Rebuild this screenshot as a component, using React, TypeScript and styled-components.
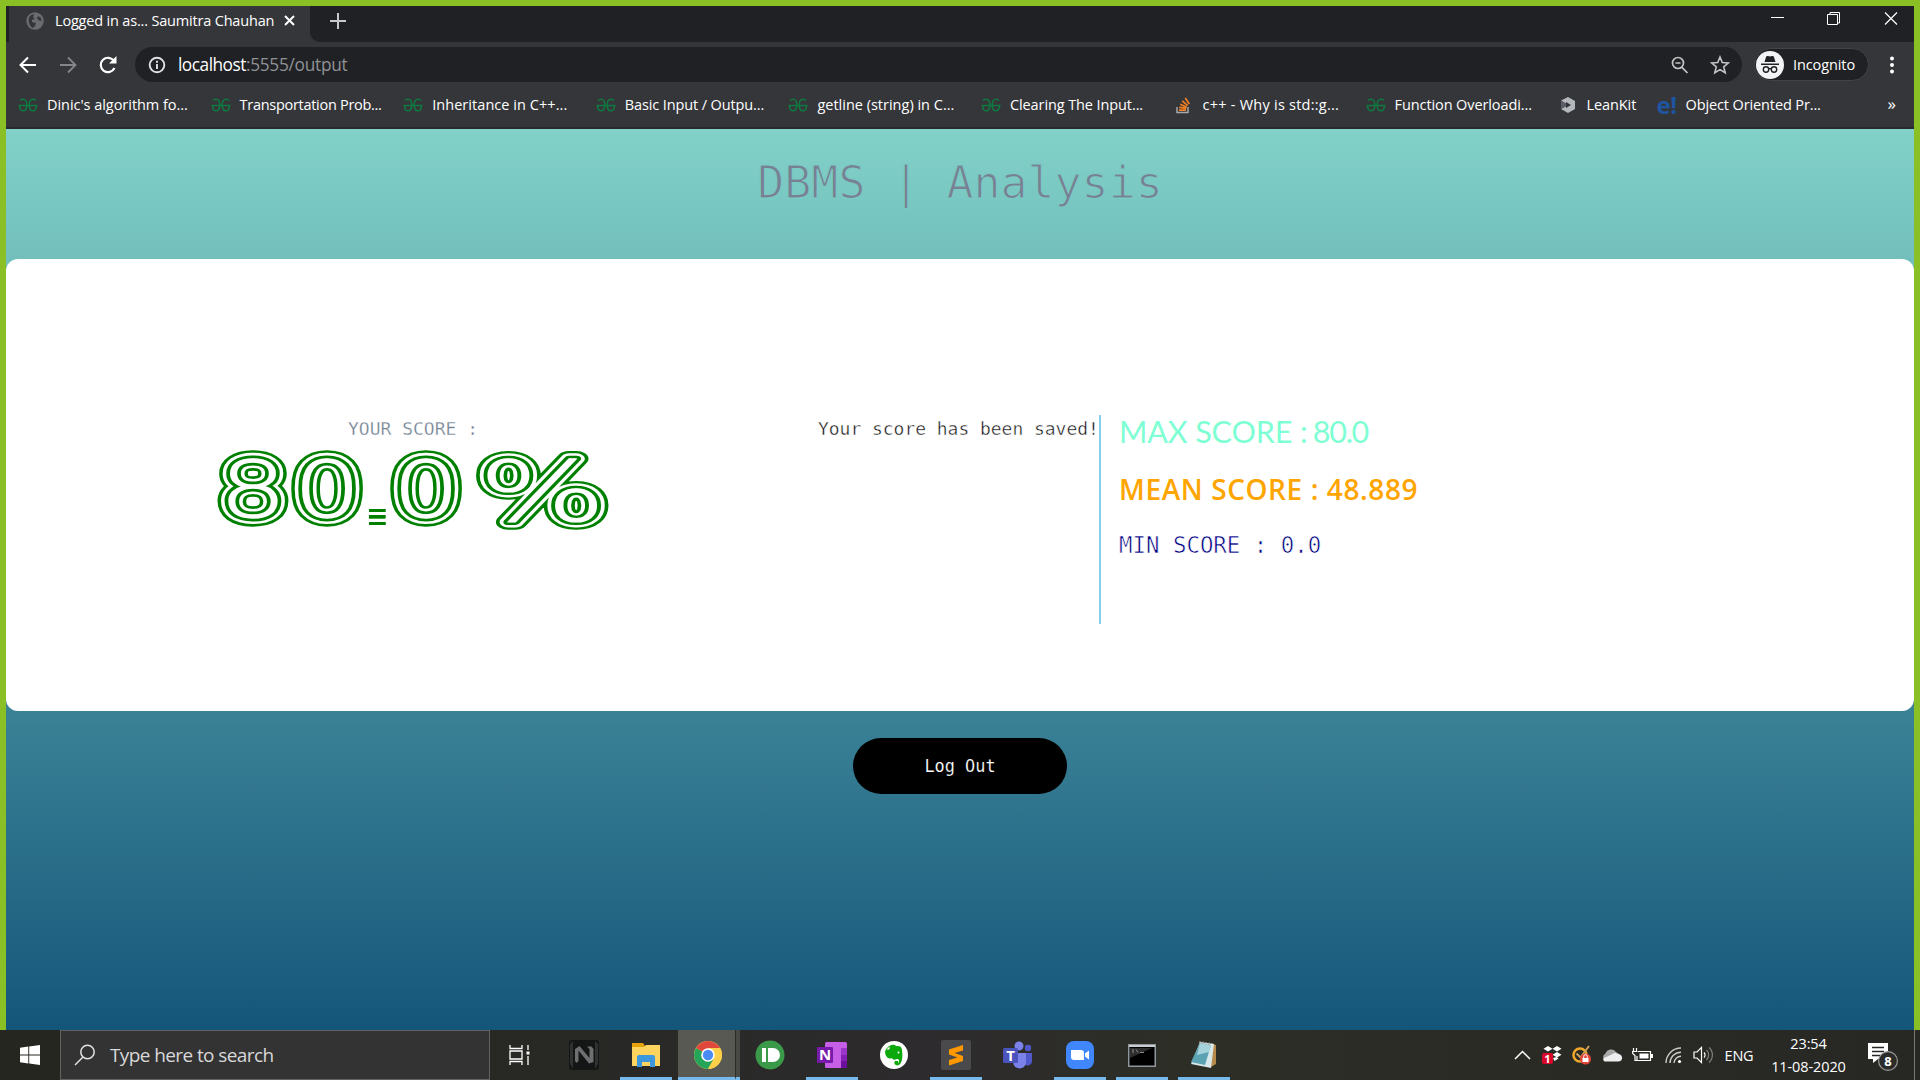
import React from 'react';
import styled, { createGlobalStyle } from 'styled-components';

const ui = `'Open Sans', 'Noto Sans', sans-serif`;
const mono = `'DejaVu Sans Mono', 'Liberation Mono', monospace`;

const GlobalStyle = createGlobalStyle`
  * { box-sizing: border-box; }
  body { margin: 0; background: #8bbf26; font-family: ${ui}; overflow: hidden; }
  svg { display: block; flex: none; }
`;

const Desktop = styled.div`
  width: 1920px;
  height: 1080px;
  display: flex;
  flex-direction: column;
  background: #8bbf26;
`;
const BrowserWindow = styled.div`
  height: 1030px;
  padding: 6px 6px 0 6px;
  display: flex;
  flex-direction: column;
`;

/* ---------- browser chrome ---------- */
const TabStrip = styled.div`
  height: 36px;
  flex: none;
  background: #202124;
  display: flex;
  justify-content: space-between;
  padding-left: 3px;
`;
const TabGroup = styled.div`
  display: flex;
  align-items: center;
`;
const Tab = styled.div`
  width: 301px;
  height: 36px;
  background: #35363a;
  display: flex;
  align-items: center;
  padding: 0 0 7px 17px;
`;
const TabTitle = styled.span`
  width: 229px;
  margin-left: 11px;
  font-size: 14.5px;
  letter-spacing: -0.18px;
  color: #fff;
  white-space: nowrap;
`;
const TabCurve = styled.div`
  width: 10px;
  height: 10px;
  align-self: flex-end;
  background: radial-gradient(circle at 10px 0, #202124 9.5px, #35363a 10.5px);
`;
const NewTab = styled.div`
  padding: 0 0 7px 10px;
`;
const WindowControls = styled.div`
  display: flex;
  padding-top: 4px;
  margin-right: -5px;
`;
const ControlSlot = styled.div`
  width: 57px;
  height: 18px;
  display: flex;
  justify-content: center;
`;
const Toolbar = styled.div`
  height: 45px;
  flex: none;
  background: #35363a;
  display: flex;
  align-items: center;
`;
const NavSlot = styled.div<{ $w: number }>`
  width: ${p => p.$w}px;
  display: flex;
  justify-content: center;
`;
const Omnibox = styled.div`
  width: 1607px;
  height: 35px;
  margin-left: 6px;
  border-radius: 18px;
  background: #202124;
  display: flex;
  align-items: center;
  padding: 0 12px 0 13px;
`;
const Url = styled.div`
  flex: 1;
  margin-left: 12px;
  font-size: 17.3px;
  letter-spacing: -0.5px;
  color: #fff;
  span { color: #8f9195; letter-spacing: -0.28px; }
`;
const OmniActions = styled.div`
  display: flex;
  gap: 20px;
`;
const Incognito = styled.div`
  width: 115px;
  height: 33px;
  margin-left: 12px;
  border-radius: 17px;
  border: 1px solid #424347;
  background: #202124;
  display: flex;
  align-items: center;
  gap: 9px;
  padding-left: 1px;
  color: #fff;
  font-size: 14.5px;
  letter-spacing: -0.1px;
`;
const MenuSlot = styled.div`
  flex: 1;
  display: flex;
  justify-content: center;
`;
const Bookmarks = styled.div`
  height: 42px;
  flex: none;
  background: #35363a;
  border-bottom: 2px solid #292a2d;
  display: flex;
  align-items: center;
  padding: 0 0 5px 11px;
`;
const Bookmark = styled.div<{ $w: number }>`
  width: ${p => p.$w}px;
  display: flex;
  align-items: center;
  gap: 8px;
  color: #fff;
  font-size: 14.5px;
  white-space: nowrap;
`;
const BookmarkLabel = styled.span<{ $ls: number }>`
  letter-spacing: ${p => p.$ls}px;
`;
const More = styled.div`
  margin-left: auto;
  padding: 0 18px 3px 0;
  color: #fff;
  font-size: 17px;
`;

/* ---------- page ---------- */
const Page = styled.main`
  flex: 1;
  width: 1908px;
  background: linear-gradient(#82d1c8, #14567a);
`;
const PageTitle = styled.h1`
  height: 130px;
  margin: 0;
  padding-top: 29px;
  text-align: center;
  font: 400 44.9px/50px ${mono};
  color: #788094;
  -webkit-text-stroke: 1.2px #7bcac3;
`;
const Card = styled.section`
  height: 452px;
  border-radius: 12px;
  background: #fff;
  padding-top: 156px;
  display: flex;
`;
const ScoreColumn = styled.div`
  width: 812px;
  height: 209px;
  display: flex;
  flex-direction: column;
  align-items: center;
`;
const ScoreLabel = styled.div`
  height: 28px;
  padding-left: 2px;
  font: 18px/28px ${mono};
  color: #708090;
  -webkit-text-stroke: 0.3px #fff;
  white-space: pre;
`;
const SavedColumn = styled.div`
  width: 283px;
  height: 209px;
  border-right: 2px solid #87ceeb;
  font: 17.95px/28px ${mono};
  color: #111;
  -webkit-text-stroke: 0.4px #fff;
  white-space: nowrap;
`;
const Stats = styled.div`
  padding-left: 18px;
  white-space: nowrap;
`;
const MaxScore = styled.div`
  font: 400 30.5px/33px Lato, sans-serif;
  letter-spacing: -0.1px;
  color: #7fffd4;
  span { letter-spacing: -1.3px; }
`;
const MeanScore = styled.div`
  margin-top: 22px;
  font: 600 28px/38px ${ui};
  letter-spacing: 0.6px;
  color: orange;
`;
const MinScore = styled.div`
  margin-top: 21px;
  font: 22.4px/32px ${mono};
  color: #000080;
  -webkit-text-stroke: 0.6px #fff;
`;
const LogOut = styled.button`
  display: block;
  width: 214px;
  height: 56px;
  margin: 27px auto 0;
  border: 0;
  border-radius: 28px;
  background: #000;
  color: #fff;
  font: 16.9px ${mono};
  -webkit-text-stroke: 0.15px #000;
`;
const NeonSvg = styled.svg`
  font-family: 'DejaVu Sans Light', 'DejaVu Sans', sans-serif;
  font-weight: 200;
  overflow: visible;
  stroke-linejoin: round;
`;
const NeonLayer = styled.g<{ $w: number; $c: string }>`
  fill: ${p => p.$c};
  stroke: ${p => p.$c};
  stroke-width: ${p => p.$w}px;
  text, tspan, use { vector-effect: non-scaling-stroke; }
`;
const BarredPoint = styled.tspan`
  font: 700 90px 'DejaVu Sans', sans-serif;
  fill: url(#bars);
  stroke: none;
`;

/* Parallel-line lettering: one hairline text, stroked in alternating widths. */
const layers: [number, string][] = [[20.6, 'green'], [14.4, '#fff'], [8.2, 'green']];
const ScoreNumber = () => (
  <NeonSvg width="400" height="90" viewBox="212 443 400 90">
    <defs>
      <pattern id="bars" patternUnits="userSpaceOnUse" x="0" y="-500" width="1000" height="1000">
        <path d="M271.300 492h12v3h-12zM271.300 498.300h12v3h-12zM271.300 505h12v3h-12z" fill="green" />
      </pattern>
    </defs>
    {layers.map(([w, c]) => (
      <NeonLayer key={w} $w={w} $c={c}>
        <use href="#neon-number" />
      </NeonLayer>
    ))}
    <NeonLayer $w={1.6} $c="#fff">
      <text id="neon-number" transform="translate(0 517) scale(1.36 1)" fontSize="78" x="161.200 215.900">
        80<BarredPoint x="262" y="9">.</BarredPoint><tspan x="288.700" y="0">0</tspan>
      </text>
    </NeonLayer>
    {layers.map(([w, c]) => (
      <NeonLayer key={w} $w={w} $c={c}>
        <use href="#neon-percent" />
      </NeonLayer>
    ))}
    <NeonLayer $w={1.6} $c="#fff">
      <text id="neon-percent" transform="translate(0 520.500) scale(1.6 1)" fontSize="84" x="299">%</text>
    </NeonLayer>
  </NeonSvg>
);

/* ---------- taskbar ---------- */
const Taskbar = styled.footer`
  height: 50px;
  background: linear-gradient(90deg, #25261f, #282825 30%, #2d2b2d 48%, #2d2e26 62%, #272724);
  display: flex;
`;
const Start = styled.div`
  width: 60px;
  display: flex;
  align-items: center;
  justify-content: center;
`;
const Search = styled.div`
  width: 430px;
  border: 1px solid #626262;
  background: #333;
  display: flex;
  align-items: center;
  padding-left: 13px;
  gap: 14px;
  color: #d8d8d8;
  font-size: 19px;
  letter-spacing: -0.6px;
`;
const TaskItem = styled.div<{ $w: number; $running?: boolean; $active?: boolean }>`
  width: ${p => p.$w}px;
  height: 50px;
  margin-left: ${p => (p.$active ? -4 : 0)}px;
  display: flex;
  align-items: center;
  justify-content: center;
  background: ${p => (p.$active ? '#585953' : 'transparent')};
  border-bottom: 3px solid ${p => (p.$running ? '#76b9ed' : 'transparent')};
  padding: 3px 0 0 ${p => (p.$active ? 3 : 0)}px;
  background-clip: padding-box;
`;
const Apps = styled.div`
  display: flex;
  gap: 10px;
  margin-left: 1px;
`;
const ActiveEdge = styled.div`
  width: 5px;
  height: 50px;
  margin: 0 -6px 0 -10px;
  background: #484945;
  border-left: 1px solid #2c2d29;
  border-bottom: 3px solid #76b9ed;
`;
const Tray = styled.div`
  margin-left: auto;
  display: flex;
  align-items: center;
  color: #fff;
`;
const TraySlot = styled.div<{ $w: number }>`
  width: ${p => p.$w}px;
  display: flex;
  justify-content: center;
`;
const Lang = styled.div`
  width: 42px;
  text-align: center;
  font-size: 14.5px;
  letter-spacing: -0.2px;
`;
const Clock = styled.div`
  width: 97px;
  text-align: center;
  font-size: 14.5px;
  line-height: 23px;
  letter-spacing: -0.1px;
`;
const Notifications = styled.div`
  width: 57px;
  padding-right: 8px;
  display: flex;
  justify-content: center;
`;
const ShowDesktop = styled.div`
  width: 6px;
  height: 50px;
  border-left: 1px solid #777;
`;

/* ---------- icons ---------- */
const GG = () => (
  <svg width="22" height="14" viewBox="0 0 22 14" fill="none" stroke="#0f7a3f" strokeWidth="1.500">
    <path d="M1.500 7.500h19M3 2.500Q4 1.200 6 1.200C8.500 1.200 9.800 3.500 9.800 7S8.500 12.800 6 12.800 2.600 11 2.600 7.500M19 2.500Q18 1.200 16 1.200C13.500 1.200 12.200 3.500 12.200 7s1.300 5.800 3.800 5.800 3.400-1.800 3.400-5.300" />
  </svg>
);
const StackOverflow = () => (
  <svg width="22" height="18" viewBox="0 0 22 18" fill="none">
    <path d="M4 11v5.500h11V11" stroke="#a8a8a8" strokeWidth="1.500" />
    <path d="M6 14.200h7M6.200 11.300l7 1M7.300 8.200l6.400 3M9.300 4.800l5.300 4.900M12.300 2l4 6" stroke="#f48024" strokeWidth="1.700" />
  </svg>
);
const LeanKit = () => (
  <svg width="20" height="18" viewBox="0 0 20 18">
    <path d="M2 4.500 9 1l7 4v8l-7 4-7-4 7-4z" fill="#b4b7bb" />
    <path d="M2 4.500 9 9l-7 4z" fill="#5b5e66" />
    <path d="M7 6l5 3-5 3z" fill="#35363a" />
  </svg>
);
const ELogo = styled.span`
  width: 21px;
  font: 700 24px/20px ${ui};
  color: #1d55a0;
  letter-spacing: -0.5px;
`;
const Explorer = () => (
  <svg width="30" height="30" viewBox="0 0 30 30">
    <path d="M1 3h11l2 3h14v5H1z" fill="#e6a20c" />
    <path d="M1 7h12l2-2h14v21H1z" fill="#ffd45e" />
    <path d="M6 26V17q0-2 2-2h14q2 0 2 2v10h-5v-5h-8v5H6z" fill="#3d97dc" />
  </svg>
);
const Chrome = () => (
  <svg width="28" height="28" viewBox="0 0 28 28">
    <circle cx="14" cy="14" r="14" fill="#fdd04a" />
    <path d="M14 14 1.900 7A14 14 0 0 1 26.100 7z" fill="#e0473d" />
    <path d="M14 14 1.900 7A14 14 0 0 0 14 28l6-10.500z" fill="#25a45a" />
    <path d="M14 7h12.100A14 14 0 0 1 14 28l6-10.500z" fill="#fdd04a" />
    <circle cx="14" cy="14" r="6.800" fill="#fff" />
    <circle cx="14" cy="14" r="5.200" fill="#4b8bf4" />
  </svg>
);
const Pushbullet = () => (
  <svg width="30" height="30" viewBox="0 0 30 30">
    <circle cx="15" cy="15" r="14.500" fill="#3b9a49" />
    <path d="M7 8h4v14H7zM13 8h5a7 7 0 0 1 0 14h-5z" fill="#fff" />
  </svg>
);
const IconLetter = styled.text<{ $size?: number }>`
  font: 700 ${p => p.$size ?? 15}px ${ui};
  fill: #fff;
  text-anchor: middle;
`;
const OneNote = () => (
  <svg width="30" height="28" viewBox="0 0 30 28">
    <rect x="8" y="1" width="22" height="26" rx="1.500" fill="#c75fe6" />
    <path d="M24 7h6v7h-6z" fill="#9a36c9" />
    <path d="M24 14h6v6h-6z" fill="#8420b5" />
    <path d="M24 20h6v7h-6z" fill="#6b0f9e" />
    <rect y="6" width="16" height="16" rx="1" fill="#7719aa" />
    <IconLetter x="8" y="19.300">N</IconLetter>
  </svg>
);
const Evernote = () => (
  <svg width="28" height="28" viewBox="0 0 28 28">
    <circle cx="14" cy="14" r="14" fill="#fff" />
    <path d="M5 10l5-5c2-2 5-1 6 0 5 0 6 1 6 5 1 6 0 12-3 14-3 1-6-1-4-4l3 0v2c2-2 1-4-1-4-3 1-4 1-5-1-4 2-7-2-7-7zM5.500 8.500h4v-4z" fill="#0ca80c" />
    <circle cx="18.500" cy="11.500" r="1" fill="#fff" />
  </svg>
);
const Sublime = () => (
  <svg width="30" height="30" viewBox="0 0 30 30">
    <rect width="30" height="30" rx="2" fill="#4a4a4c" />
    <path d="M8 9.500 22 5v5.500L13.500 13l8.500 3v5L8 25.500V20l8.500-2.500L8 14.500z" fill="#ff9800" />
  </svg>
);
const Teams = () => (
  <svg width="30" height="28" viewBox="0 0 30 28">
    <circle cx="25" cy="7" r="3.200" fill="#5059c9" />
    <path d="M20 12h9v8c0 5-7 6-8 2z" fill="#5059c9" />
    <circle cx="16" cy="5" r="4.500" fill="#7b83eb" />
    <path d="M9 12h14v9c0 8-12 9-13 0z" fill="#7b83eb" />
    <rect y="7" width="15" height="15" rx="1.500" fill="#4b53bc" />
    <IconLetter x="7.500" y="19.500">T</IconLetter>
  </svg>
);
const ZoomApp = () => (
  <svg width="28" height="28" viewBox="0 0 28 28">
    <rect width="28" height="28" rx="8" fill="#4087fc" />
    <path d="M5 9h10q3 0 3 3v7H8q-3 0-3-3zM19 12.500l4-3v9l-4-3z" fill="#fff" />
  </svg>
);
const Cmd = () => (
  <svg width="28" height="23" viewBox="0 0 28 23">
    <rect x=".75" y=".75" width="26.500" height="21.500" fill="#000" stroke="#8f969c" strokeWidth="1.500" />
    <path d="M1 2h26" stroke="#c9ced2" strokeWidth="2" />
    <path d="M2 4h22L2 14z" fill="#2d2d2d" />
    <path d="M4 6h2M4 8h2M8 5.500l2 3M12 8.500h4" stroke="#aaa" strokeWidth=".8" />
  </svg>
);
const Notepad = () => (
  <svg width="28" height="30" viewBox="0 0 28 30">
    <path d="M21 3l5 2v19l-5 3z" fill="#b58a4c" />
    <path d="M10 2l14 2-3 24L1 24z" fill="#d9e8ea" />
    <path d="M10 3l11 2-6 20L1 22z" fill="#5ba3b3" />
    <path d="M10 3l11 2-2 7-12 3z" fill="#a5d3dc" />
    <path d="M10 1v3M13 1.500v3M16 2v3M19 2.500v3" stroke="#aaa" strokeWidth="1" />
  </svg>
);
const NIcon = () => (
  <svg width="30" height="30" viewBox="0 0 30 30">
    <rect width="30" height="30" rx="3" fill="#141515" />
    <path d="M1 4v20l3 5V1zM29 4v20l-3 5V1z" fill="#303132" />
    <path d="M6 21V9l4.500-3 10 12V9L18 6.500h4.500L24.500 9v13L20 23.500l-10.500-13V21L7.500 23z" fill="#6e6f71" />
  </svg>
);

const articles: [string, number][] = [
  ["Dinic's algorithm fo...", -0.04],
  ['Transportation Prob...', -0.29],
  ['Inheritance in C++...', 0.05],
  ['Basic Input / Outpu...', -0.12],
  ['getline (string) in C...', 0],
  ['Clearing The Input...', -0.1],
];

export default function App() {
  return (
    <>
      <GlobalStyle />
      <Desktop>
        <BrowserWindow>
          <TabStrip>
            <TabGroup>
              <Tab>
                <svg width="18" height="18" viewBox="0 0 18 18">
                  <circle cx="9" cy="9" r="8.700" fill="#6a6c70" />
                  <path d="M3 5.500c2-3 4-3.500 5-2.500L7 5.500l2 1-3 1.500v2l4 1-1 3-2 2C4 15 2 10 3 5.500zM12 4l3 2 .5 3-2.500-.5-2-2z" fill="#35363a" />
                </svg>
                <TabTitle>Logged in as... Saumitra Chauhan</TabTitle>
                <svg width="11" height="11" viewBox="0 0 11 11" stroke="#fff" strokeWidth="2">
                  <path d="M1 1l9 9M10 1l-9 9" />
                </svg>
              </Tab>
              <TabCurve />
              <NewTab>
                <svg width="16" height="16" viewBox="0 0 16 16" stroke="#c8c9cb" strokeWidth="2">
                  <path d="M8 0v16M0 8h16" />
                </svg>
              </NewTab>
            </TabGroup>
            <WindowControls>
              <ControlSlot><svg width="14" height="16" viewBox="0 0 14 16"><path d="M1 7.500h13" stroke="#fff" /></svg></ControlSlot>
              <ControlSlot>
                <svg width="14" height="16" viewBox="0 0 14 16" fill="none" stroke="#fff">
                  <path d="M.5 4.500h10v10H.5zM3 4V2.500h9.500V13H11" />
                </svg>
              </ControlSlot>
              <ControlSlot><svg width="14" height="16" viewBox="0 0 14 16" stroke="#fff" strokeWidth="1.200"><path d="M1 2.500l12 12M13 2.500l-12 12" /></svg></ControlSlot>
            </WindowControls>
          </TabStrip>
          <Toolbar>
            <NavSlot $w={43}>
              <svg width="18" height="18" viewBox="0 0 18 18" fill="none" stroke="#fff" strokeWidth="2"><path d="M17 9H2M9 1.500L1.500 9 9 16.500" /></svg>
            </NavSlot>
            <NavSlot $w={37}>
              <svg width="18" height="18" viewBox="0 0 18 18" fill="none" stroke="#85868a" strokeWidth="1.800"><path d="M1 9h15M9 1.500L16.500 9 9 16.500" /></svg>
            </NavSlot>
            <NavSlot $w={43}>
              <svg width="18" height="18" viewBox="0 0 18 18"><path d="M15.500 12A7.200 7.200 0 1 1 15 5" fill="none" stroke="#fff" strokeWidth="2.200" /><path d="M17.500 0v7.500H10z" fill="#fff" /></svg>
            </NavSlot>
            <Omnibox>
              <svg width="18" height="18" viewBox="0 0 18 18" fill="none" stroke="#e0e1e3" strokeWidth="1.900"><circle cx="9" cy="9" r="7.300" /><path d="M9 8v5M9 4.800v2" /></svg>
              <Url>localhost<span>:5555/output</span></Url>
              <OmniActions>
                <svg width="20" height="20" viewBox="0 0 20 20" fill="none" stroke="#c2c3c5" strokeWidth="1.700"><circle cx="8" cy="8" r="5.500" /><path d="M12 12.300L17.500 18M5.500 8h5" /></svg>
                <svg width="20" height="20" viewBox="0 0 20 20" fill="none" stroke="#c2c3c5" strokeWidth="1.600"><path d="M10 2l2.300 5.500 6 .5-4.600 3.900 1.500 5.900L10 14.600l-5.200 3.200 1.500-5.900L1.700 8l6-.5z" /></svg>
              </OmniActions>
            </Omnibox>
            <Incognito>
              <svg width="28" height="28" viewBox="0 0 28 28">
                <circle cx="14" cy="14" r="14" fill="#f1f3f4" />
                <path d="M10 6q.5-1.500 2-1l2 .5 2-.5q1.500-.500 2 1l1.500 5h-11zM5 12.500h18V14H5z" fill="#202124" />
                <g fill="none" stroke="#202124" strokeWidth="1.400"><circle cx="10" cy="18.500" r="2.700" /><circle cx="18" cy="18.500" r="2.700" /><path d="M12.500 18q1.500-1 3 0" /></g>
              </svg>
              Incognito
            </Incognito>
            <MenuSlot>
              <svg width="4" height="18" viewBox="0 0 4 18" fill="#fff"><circle cx="2" cy="2.500" r="2" /><circle cx="2" cy="9" r="2" /><circle cx="2" cy="15.500" r="2" /></svg>
            </MenuSlot>
          </Toolbar>
          <Bookmarks>
            {articles.map(([label, ls]) => (
              <Bookmark $w={192.6} key={label}><GG /><BookmarkLabel $ls={ls}>{label}</BookmarkLabel></Bookmark>
            ))}
            <Bookmark $w={192}><StackOverflow /><BookmarkLabel $ls={0.24}>c++ - Why is std::g...</BookmarkLabel></Bookmark>
            <Bookmark $w={194}><GG /><BookmarkLabel $ls={-0.1}>Function Overloadi...</BookmarkLabel></Bookmark>
            <Bookmark $w={98}><LeanKit /><BookmarkLabel $ls={-0.1}>LeanKit</BookmarkLabel></Bookmark>
            <Bookmark $w={190}><ELogo>e!</ELogo><BookmarkLabel $ls={-0.12}>Object Oriented Pr...</BookmarkLabel></Bookmark>
            <More>»</More>
          </Bookmarks>
          <Page>
            <PageTitle>DBMS | Analysis</PageTitle>
            <Card>
              <ScoreColumn>
                <ScoreLabel>YOUR SCORE :</ScoreLabel>
                <ScoreNumber />
              </ScoreColumn>
              <SavedColumn>Your score has been saved!</SavedColumn>
              <Stats>
                <MaxScore>MAX SCORE <span>: 80.0</span></MaxScore>
                <MeanScore>MEAN SCORE : 48.889</MeanScore>
                <MinScore>MIN SCORE : 0.0</MinScore>
              </Stats>
            </Card>
            <LogOut>Log Out</LogOut>
          </Page>
        </BrowserWindow>
        <Taskbar>
          <Start>
            <svg width="20" height="20" viewBox="0 0 20 20" fill="#fff"><path d="M0 2.800l8.300-1.200v8H0zM9.200 1.500L20 0v9.600H9.200zM0 10.400h8.300v8L0 17.200zM9.200 10.400H20V20L9.200 18.500z" /></svg>
          </Start>
          <Search>
            <svg width="22" height="22" viewBox="0 0 22 22" fill="none" stroke="#e4e4e4" strokeWidth="1.500"><circle cx="13.500" cy="8" r="6.700" /><path d="M9 13l-8 8" /></svg>
            Type here to search
          </Search>
          <TaskItem $w={59}>
            <svg width="21" height="20" viewBox="0 0 21 20" fill="none" stroke="#fff" strokeWidth="1.300">
              <path d="M1 0v3.500h12V0M1 6h12v8H1zM1 20v-3.500h12V20M19 0v5M19 11v9" /><path d="M17.500 6.500h3v3h-3z" fill="#fff" stroke="none" />
            </svg>
          </TaskItem>
          <TaskItem $w={70}><NIcon /></TaskItem>
          <Apps>
            <TaskItem $w={52} $running><Explorer /></TaskItem>
            <TaskItem $w={57} $running $active><Chrome /></TaskItem>
            <ActiveEdge />
            <TaskItem $w={52}><Pushbullet /></TaskItem>
            <TaskItem $w={52} $running><OneNote /></TaskItem>
            <TaskItem $w={52}><Evernote /></TaskItem>
            <TaskItem $w={52} $running><Sublime /></TaskItem>
            <TaskItem $w={52}><Teams /></TaskItem>
            <TaskItem $w={52} $running><ZoomApp /></TaskItem>
            <TaskItem $w={52} $running><Cmd /></TaskItem>
            <TaskItem $w={52} $running><Notepad /></TaskItem>
          </Apps>
          <Tray>
            <TraySlot $w={30}><svg width="17" height="10" viewBox="0 0 17 10" fill="none" stroke="#fff" strokeWidth="1.500"><path d="M1 9l7.500-7.500L16 9" /></svg></TraySlot>
            <TraySlot $w={30}>
              <svg width="20" height="20" viewBox="0 0 20 20">
                <path d="M6 1l4.500 2.700L6 6.500 1.500 3.700zM15 1l4.500 2.700L15 6.500l-4.500-2.800zM15 7l4.500 2.700L15 12.500l-4.500-2.800zM11 13l3.500-1 2 1.500-4 2.500z" fill="#fff" />
                <rect x="0" y="8" width="11" height="11" rx="2" fill="#d9082b" />
                <IconLetter x="5.500" y="17.500" $size={11}>1</IconLetter>
              </svg>
            </TraySlot>
            <TraySlot $w={30}>
              <svg width="20" height="20" viewBox="0 0 20 20" fill="none">
                <circle cx="8" cy="10" r="6.500" stroke="#f0a92b" strokeWidth="2.500" />
                <path d="M4.500 8.500l4 4L17 1" stroke="#c9a25c" strokeWidth="2" />
                <circle cx="13.500" cy="14" r="5.500" fill="#e2443a" /><rect x="10.500" y="13" width="6" height="4" fill="#fff" /><path d="M11.700 13v-1.500a1.800 1.800 0 0 1 3.600 0V13" stroke="#fff" />
              </svg>
            </TraySlot>
            <TraySlot $w={30}>
              <svg width="21" height="14" viewBox="0 0 21 14"><path d="M4 13a4 4 0 0 1-.5-7.500A6 6 0 0 1 14 4l3 2z" fill="#a9a9a9" /><path d="M4 13.500c-3.500 0-4-4 .5-4.500L13 4.800l3 1.200c5 0 6 7.500 0 7.500z" fill="#eee" /></svg>
            </TraySlot>
            <TraySlot $w={31}>
              <svg width="21" height="14" viewBox="0 0 21 14" fill="none" stroke="#fff" strokeWidth="1.200"><path d="M6 3.500h12.500v9H5V8M1.500 0v3M4.500 0v3M0 3.500h5.500M.7 3.500v2L3 7.500v5h2" /><path d="M7.500 5.500h9v5h-9z" fill="#fff" stroke="none" /><path d="M20 6v4" strokeWidth="2" /></svg>
            </TraySlot>
            <TraySlot $w={30}>
              <svg width="17" height="17" viewBox="0 0 17 17" fill="none" stroke="#ccc" strokeWidth="1.400"><path d="M1 16A15 15 0 0 1 16 1M5 16A11 11 0 0 1 16 5.200M9 16a7 7 0 0 1 7-6.700" /><circle cx="14.500" cy="14.500" r="1.600" fill="#fff" stroke="none" /></svg>
            </TraySlot>
            <TraySlot $w={30}>
              <svg width="20" height="18" viewBox="0 0 20 18" fill="none" stroke="#fff" strokeWidth="1.200"><path d="M1 6h3l4.500-4.500v15L4 12H1z" /><path d="M11 6.500a3.500 3.500 0 0 1 0 5" /><path d="M13.500 4a7 7 0 0 1 0 10M16 1.500a10 10 0 0 1 0 15" stroke="#808080" /></svg>
            </TraySlot>
            <Lang>ENG</Lang>
            <Clock>23:54<br />11-08-2020</Clock>
            <Notifications>
              <svg width="32" height="32" viewBox="0 0 32 32">
                <path d="M2 4h20v16H12l-5 4v-4H2z" fill="#fff" />
                <path d="M6 8.500h12M6 12.500h12M6 16.500h8" stroke="#272724" strokeWidth="1.300" />
                <circle cx="22" cy="22" r="9.400" fill="#2b2c29" stroke="#9a9a9a" strokeWidth="1.200" />
                <IconLetter x="22" y="26.800" $size={13}>8</IconLetter>
              </svg>
            </Notifications>
            <ShowDesktop />
          </Tray>
        </Taskbar>
      </Desktop>
    </>
  );
}
